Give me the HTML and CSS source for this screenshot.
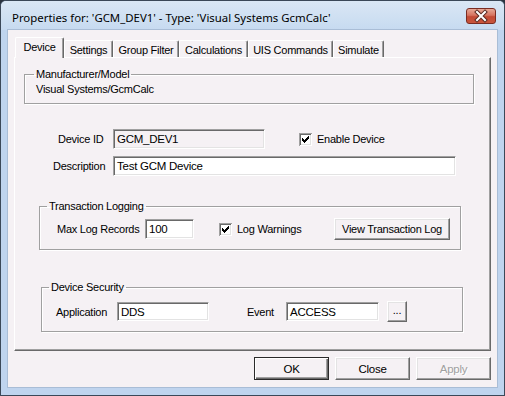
FILE: index.html
```html
<!DOCTYPE html>
<html>
<head>
<meta charset="utf-8">
<link rel="stylesheet" href="styles.css">
</head>
<body>
<div class="window">
  <div class="titlebar">
    <span class="title">Properties for: 'GCM_DEV1' - Type: 'Visual Systems GcmCalc'</span>
    <span class="close">
      <svg width="30" height="16" viewBox="0 0 30 16">
        <path d="M11 4 L19 12 M19 4 L11 12" stroke="#5a2a22" stroke-width="4" stroke-linecap="square" fill="none"/>
        <path d="M11 4 L19 12 M19 4 L11 12" stroke="#ffffff" stroke-width="2" stroke-linecap="square" fill="none"/>
      </svg>
    </span>
  </div>
  <div class="client">
    <div class="tabs">
      <div class="tab sel t-device">Device</div>
      <div class="tab t-settings">Settings</div>
      <div class="tab t-group">Group Filter</div>
      <div class="tab t-calc">Calculations</div>
      <div class="tab t-uis">UIS Commands</div>
      <div class="tab t-sim">Simulate</div>
    </div>
    <div class="panel">
      <fieldset class="grp g-mfr">
        <legend>Manufacturer/Model</legend>
        <div class="mfr-text">Visual Systems/GcmCalc</div>
      </fieldset>

      <div class="row r-id">
        <span class="lbl l-id">Device ID</span>
        <span class="edit ro w-id">GCM_DEV1</span>
        <span class="chk c-enable">
          <span class="box"><svg width="13" height="13" viewBox="0 0 13 13"><path d="M9 3h1v1h-1z M8 4h2v1h-2z M3 5h1v1h-1z M7 5h3v1h-3z M3 6h2v1h-2z M6 6h3v1h-3z M3 7h5v1h-5z M4 8h3v1h-3z M5 9h1v1h-1z" fill="#000"/></svg></span>
          <span class="chk-text">Enable Device</span>
        </span>
      </div>

      <div class="row r-desc">
        <span class="lbl l-desc">Description</span>
        <span class="edit w-desc">Test GCM Device</span>
      </div>

      <fieldset class="grp g-log">
        <legend>Transaction Logging</legend>
        <div class="grp-row log-row">
          <span class="lbl l-max">Max Log Records</span>
          <span class="edit w-max">100</span>
          <span class="chk c-warn">
            <span class="box"><svg width="13" height="13" viewBox="0 0 13 13"><path d="M9 3h1v1h-1z M8 4h2v1h-2z M3 5h1v1h-1z M7 5h3v1h-3z M3 6h2v1h-2z M6 6h3v1h-3z M3 7h5v1h-5z M4 8h3v1h-3z M5 9h1v1h-1z" fill="#000"/></svg></span>
            <span class="chk-text">Log Warnings</span>
          </span>
          <span class="btn b-view">View Transaction Log</span>
        </div>
      </fieldset>

      <fieldset class="grp g-sec">
        <legend>Device Security</legend>
        <div class="grp-row sec-row">
          <span class="lbl l-app">Application</span>
          <span class="edit w-app">DDS</span>
          <span class="lbl l-event">Event</span>
          <span class="edit w-event">ACCESS</span>
          <span class="btn b-dots">...</span>
        </div>
      </fieldset>
    </div>
    <div class="buttons">
      <span class="btn b-dlg def">OK</span>
      <span class="btn b-dlg">Close</span>
      <span class="btn b-dlg dis">Apply</span>
    </div>
  </div>
</div>
</body>
</html>
```

FILE: styles.css
```css
* { box-sizing: border-box; }
html, body { margin: 0; padding: 0; }
body {
  width: 505px;
  height: 396px;
  overflow: hidden;
  font-family: "Liberation Sans", Arial, sans-serif;
  font-size: 11px;
  letter-spacing: -0.25px;
  color: #000;
  background: #2b3440;
}

.window {
  width: 505px;
  height: 396px;
  border: 1px solid #3b4858;
  border-radius: 6px 6px 0 0;
  background: #bfd4ee;
  padding: 0 7px 8px 7px;
  display: flex;
  flex-direction: column;
}

.titlebar {
  height: 29px;
  margin: 0 -7px;
  padding: 4px 8px 0 11px;
  display: flex;
  align-items: center;
  justify-content: space-between;
  background: linear-gradient(#dae7f5, #c6daf0);
  border-radius: 5px 5px 0 0;
}
.title {
  font-family: "Noto Sans", "Open Sans", sans-serif;
  font-size: 11.4px;
  letter-spacing: 0;
  color: #000;
  white-space: nowrap;
}
.close {
  width: 30px;
  height: 16px;
  border: 1px solid #7a2c22;
  border-radius: 3px;
  background: linear-gradient(#e7a896 0%, #d6735f 45%, #c24a35 55%, #c9553c 100%);
  display: flex;
  align-items: center;
  justify-content: center;
  margin-top: -4px;
}
.close svg { display: block; margin: -1px; }

.client {
  flex: 1;
  background: #f5f1f4;
  padding: 7px 6px 0 6px;
  box-shadow: 0 0 0 1px #a9bdd6;
}

/* tabs */
.tabs {
  display: flex;
  align-items: flex-end;
  height: 21px;
  margin-left: 1px;
}
.tab {
  height: 17px;
  margin-bottom: 1px;
  border-top: 1px solid #fff;
  border-left: 1px solid #fff;
  border-right: 1px solid #696969;
  border-radius: 2px 2px 0 0;
  box-shadow: inset -1px 0 #a0a0a0;
  background: #f5f1f4;
  display: flex;
  align-items: center;
  justify-content: center;
  padding-top: 1px;
  white-space: nowrap;
}
.tab.sel {
  height: 21px;
  margin-bottom: 0;
  position: relative;
  z-index: 1;
  padding-top: 0;
  padding-bottom: 2px;
}
.t-device { width: 49px; }
.t-settings { width: 49px; }
.t-group { width: 66px; }
.t-calc { width: 69px; }
.t-uis { width: 85px; }
.t-sim { width: 51px; }

.panel {
  margin-top: -1px;
  height: 294px;
  border-top: 1px solid #fff;
  border-left: 1px solid #fff;
  border-right: 1px solid #696969;
  border-bottom: 1px solid #696969;
  box-shadow: inset -1px -1px #a0a0a0;
  display: flex;
  flex-direction: column;
  align-items: flex-start;
}

/* group boxes */
.grp {
  margin: 0;
  padding: 0;
  min-width: 0;
  border: 1px solid #a0a0a0;
  box-shadow: 1px 1px 0 #fff, inset 1px 1px 0 #fff;
}
.grp legend {
  padding: 0 2px;
  line-height: 13px;
}
.g-mfr {
  width: 450px;
  margin: 10px 0 0 9px;
  padding: 0 0 7px 0;
}
.g-mfr legend { margin-left: 9px; }
.mfr-text {
  padding: 2px 0 0 11px;
  line-height: 13px;
}

/* rows */
.row {
  display: flex;
  align-items: center;
  height: 20px;
}
.r-id { margin-top: 25px; }
.r-desc { margin-top: 7px; }

.lbl { display: inline-block; white-space: nowrap; }
.l-id { margin-left: 43px; width: 55px; }
.l-desc { margin-left: 38px; width: 60px; }

.edit {
  display: inline-block;
  height: 20px;
  line-height: 16px;
  padding: 1px 3px 0 3px;
  border-top: 1px solid #a0a0a0;
  border-left: 1px solid #a0a0a0;
  border-right: 1px solid #fff;
  border-bottom: 1px solid #fff;
  box-shadow: inset 1px 1px #696969, inset -1px -1px #e3e3e3;
  background: #fff;
  white-space: nowrap;
  font-size: 11.5px;
}
.edit.ro { background: #f5f1f4; }
.w-id { width: 152px; }
.w-desc { width: 343px; }

.chk { display: inline-flex; align-items: center; }
.box {
  width: 13px;
  height: 13px;
  background: #fff;
  box-shadow: inset 1px 1px #a0a0a0, inset -1px -1px #fff, inset 2px 2px #696969, inset -2px -2px #e3e3e3;
}
.box svg { display: block; }
.chk-text { margin-left: 5px; }
.c-enable { margin-left: 34px; }

/* transaction logging */
.g-log {
  width: 422px;
  margin: 24px 0 0 24px;
  padding: 0;
}
.g-log legend { margin-left: 7px; }
.grp-row {
  display: flex;
  align-items: center;
}
.log-row {
  height: 22px;
  margin: 5px 10px 9px 17px;
}
.l-max { width: 88px; }
.w-max { width: 49px; }
.c-warn { margin-left: 25px; }

.btn {
  display: inline-flex;
  align-items: center;
  justify-content: center;
  background: #f5f1f4;
  border: 1px solid;
  border-color: #fff #696969 #696969 #fff;
  box-shadow: inset -1px -1px #a0a0a0, inset 1px 1px #e3e3e3;
  white-space: nowrap;
}
.b-view { width: 116px; height: 22px; margin-left: auto; }

/* device security */
.g-sec {
  width: 422px;
  margin: 31px 0 0 26px;
  padding: 0;
}
.g-sec legend { margin-left: 7px; }
.sec-row {
  height: 21px;
  margin: 7px 0 9px 14px;
}
.l-app { width: 61px; }
.w-app { width: 92px; height: 19px; }
.l-event { margin-left: 38px; width: 39px; }
.w-event { width: 93px; height: 19px; }
.b-dots { width: 20px; height: 21px; margin-left: 8px; padding-bottom: 3px; }

/* dialog buttons */
.buttons {
  display: flex;
  justify-content: flex-end;
  gap: 6px;
  margin-top: 6px;
}
.b-dlg { width: 75px; height: 23px; font-size: 11.5px; }
.b-dlg.def {
  border: 1px solid #2a2a2a;
  box-shadow: inset 1px 1px #fff, inset -1px -1px #696969, inset -2px -2px #a0a0a0;
}
.b-dlg.dis { color: #a0a0a0; text-shadow: 1px 1px #fff; }
```
